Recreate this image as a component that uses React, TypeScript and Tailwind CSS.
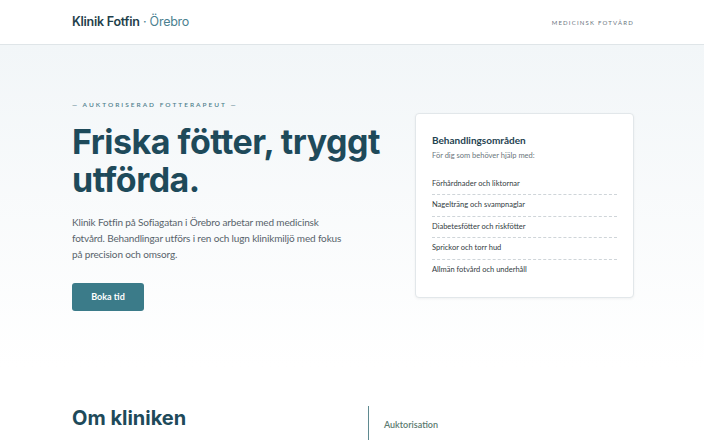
import React from "react";

const inter = { fontFamily: "Inter, 'Noto Sans', sans-serif" };
const body = { fontFamily: "Lato, 'Noto Sans', sans-serif" };

const areas = [
  "Förhårdnader och liktornar",
  "Nagelträng och svampnaglar",
  "Diabetesfötter och riskfötter",
  "Sprickor och torr hud",
  "Allmän fotvård och underhåll",
];

export default function App() {
  return (
    <div className="min-h-[440px] bg-white" style={body}>
      <header className="h-[45px] border-b border-[#dfe5e8] bg-white">
        <div className="ml-[72px] flex h-full w-[562px] items-center justify-between">
          <div className="text-[12.5px] tracking-[-0.02em] text-[#1f3f4b]" style={inter}>
            <span className="font-semibold">Klinik Fotfin</span>
            <span className="text-[#4b8190]"> · Örebro</span>
          </div>
          <div className="text-[6px] tracking-[0.2em] text-[#6b7580]">MEDICINSK FOTVÅRD</div>
        </div>
      </header>

      <section className="bg-gradient-to-b from-[#f2f6f8] to-white pt-[55px] pb-[56px]">
        <div className="ml-[72px] grid w-[562px] grid-cols-[307px_219px] items-center gap-[36px]">
          <div>
            <div className="text-[6.5px] font-semibold tracking-[0.31em] text-[#4f808c]">
              — AUKTORISERAD FOTTERAPEUT —
            </div>
            <h1
              className="mt-[13px] whitespace-nowrap text-[34px] font-bold leading-[38px] tracking-[-0.015em] text-[#1e4a5a]"
              style={inter}
            >
              Friska fötter, tryggt
              <br />
              utförda.
            </h1>
            <p className="mt-[15px] w-[276px] text-[10px] leading-[16px] tracking-[-0.015em] text-[#58636b]">
              Klinik Fotfin på Sofiagatan i Örebro arbetar med medicinsk
              <br />
              fotvård. Behandlingar utförs i ren och lugn klinikmiljö med fokus
              <br />
              på precision och omsorg.
            </p>
            <button className="mt-[21px] h-[28px] w-[72px] rounded-[3px] bg-[#3b7b89] text-[9px] font-bold text-white">
              Boka tid
            </button>
          </div>

          <div className="rounded-[4px] border border-[#e2e7ea] bg-white px-[16px] pt-[19px] pb-[17px] shadow-[0_1px_3px_rgba(0,0,0,0.05)]">
            <div className="text-[10px] font-bold text-[#1f4352]">Behandlingsområden</div>
            <div className="mt-[2px] text-[7.5px] text-[#6b757c]">För dig som behöver hjälp med:</div>
            <ul className="mt-[13px]">
              {areas.map((a, i) => (
                <li
                  key={a}
                  className={
                    "py-[5px] text-[7.5px] leading-[10.5px] text-[#333c42] " +
                    (i < areas.length - 1 ? "border-b border-dashed border-[#cfd5d9]" : "")
                  }
                >
                  {a}
                </li>
              ))}
            </ul>
          </div>
        </div>
      </section>

      <section className="pt-[39px]">
        <div className="ml-[72px] grid w-[562px] grid-cols-[1fr_266px] gap-[30px]">
          <div>
            <h2 className="text-[20px] font-bold leading-[24px] text-[#1e4a5a]" style={inter}>
              Om kliniken
            </h2>
            <p className="mt-[8px] text-[10px] leading-[16px] text-[#58636b]">
              Hos oss möts du av en auktoriserad fotterapeut med lång erfarenhet.
            </p>
          </div>
          <div className="border-l-[1.5px] border-[#5f8a90] pl-[15px] pt-[12px]">
            <div className="text-[9px] font-semibold text-[#5b7a6f]">Auktorisation</div>
          </div>
        </div>
      </section>
    </div>
  );
}
